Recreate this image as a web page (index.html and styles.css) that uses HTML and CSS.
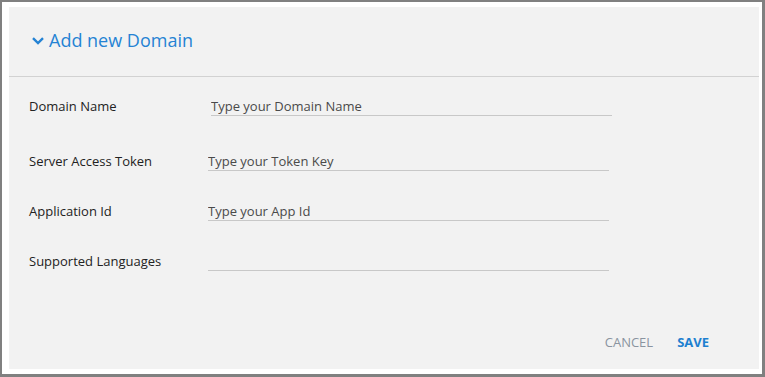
FILE: index.html
```html
<!DOCTYPE html>
<html>
<head>
<meta charset="utf-8">
<link rel="stylesheet" href="styles.css">
</head>
<body>
<div class="frame">
  <div class="panel">
    <div class="header">
      <svg class="chev" width="12" height="8" viewBox="0 0 12 8"><path d="M1 1.2 L6 6 L11 1.2" fill="none" stroke="#2583d4" stroke-width="2.4"/></svg>
      <span class="title">Add new Domain</span>
    </div>
    <div class="form">
      <div class="row first">
        <label class="label">Domain Name</label>
        <input class="field shifted" placeholder="Type your Domain Name">
      </div>
      <div class="row">
        <label class="label">Server Access Token</label>
        <input class="field" placeholder="Type your Token Key">
      </div>
      <div class="row">
        <label class="label">Application Id</label>
        <input class="field" placeholder="Type your App Id">
      </div>
      <div class="row">
        <label class="label">Supported Languages</label>
        <input class="field" placeholder="">
      </div>
    </div>
    <div class="footer">
      <button class="btn cancel">CANCEL</button>
      <button class="btn save">SAVE</button>
    </div>
  </div>
</div>
</body>
</html>
```
FILE: styles.css
```css
html, body { margin: 0; padding: 0; }
body { font-family: "Open Sans", "Noto Sans", sans-serif; background: #fff; }
.frame {
  width: 765px; height: 377px; box-sizing: border-box;
  border: 2px solid #808080; border-right-width: 3px; border-bottom-width: 3px;
  padding: 5px 3px 5px 7px; background: #fff;
}
.panel { background: #f2f2f2; height: 100%; display: flex; flex-direction: column; }
.header {
  height: 70px; box-sizing: border-box; border-bottom: 1px solid #d2d2d2;
  display: flex; align-items: center; padding-left: 23px; padding-bottom: 3px;
}
.chev { margin-right: 4px; margin-top: 1px; }
.title { font-size: 18px; color: #2583d4; margin-left: 1px; }
.form { padding: 19px 0 0 20px; display: flex; flex-direction: column; gap: 30px; }
.row { display: flex; align-items: center; height: 20px; }
.row.first { margin-bottom: 5px; }
.label { width: 179px; font-size: 13px; color: #222; font-weight: 500; }
.field {
  width: 401px; height: 20px; box-sizing: border-box; border: 0;
  border-bottom: 1px solid #c8c8c8; background: transparent; padding: 0;
  font-family: inherit; font-size: 13px; color: #444; outline: none;
}
.field::placeholder { color: #4a4a4a; }
.field.shifted { margin-left: 3px; }
.footer { display: flex; justify-content: flex-end; gap: 24px; padding-right: 50px; margin-top: 62px; }
.btn { border: 0; background: none; padding: 0; font-family: inherit; font-size: 13px; line-height: 18px; }
.cancel { color: #8a94a0; }
.save { color: #1d80d0; font-weight: 700; }
```
